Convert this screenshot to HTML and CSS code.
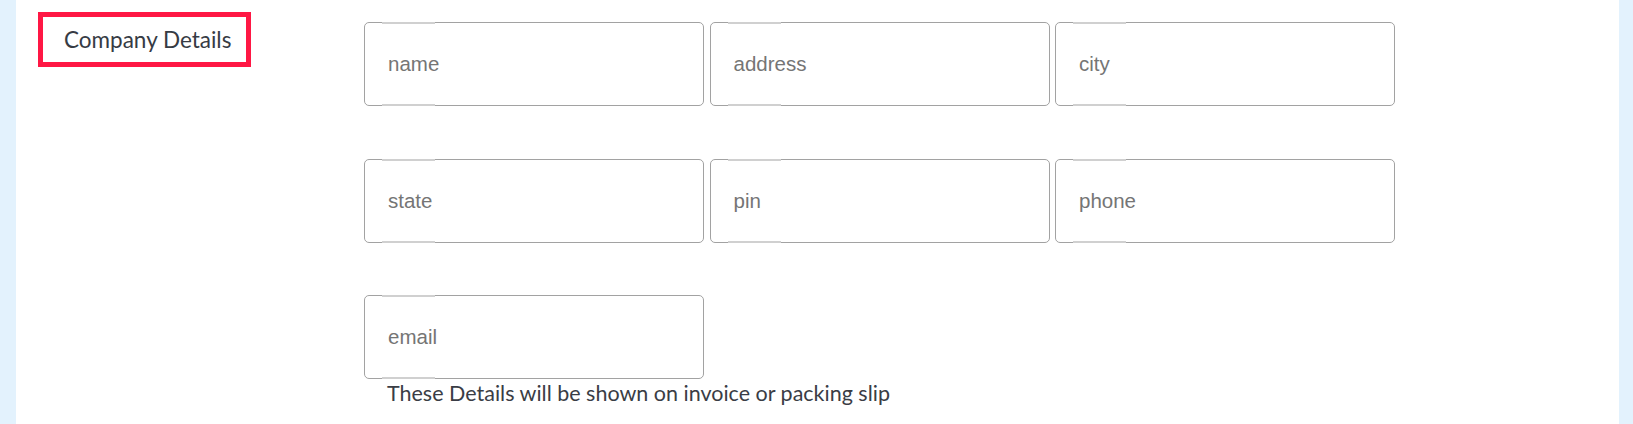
FILE: index.html
```html
<!DOCTYPE html>
<html lang="en">
<head>
<meta charset="utf-8">
<title>Company Details</title>
<link rel="stylesheet" href="styles.css">
</head>
<body>
<div class="panel">
  <div class="side">
    <div class="label-box">Company Details</div>
  </div>
  <div class="form">
    <div class="grid">
      <div class="field"><span class="ph">name</span></div>
      <div class="field"><span class="ph">address</span></div>
      <div class="field"><span class="ph">city</span></div>
      <div class="field"><span class="ph">state</span></div>
      <div class="field"><span class="ph">pin</span></div>
      <div class="field"><span class="ph">phone</span></div>
      <div class="field"><span class="ph">email</span></div>
    </div>
    <p class="help">These Details will be shown on invoice or packing slip</p>
  </div>
</div>
</body>
</html>
```
FILE: styles.css
```css
html, body {
  margin: 0;
  padding: 0;
}
body {
  background: #e3f2fd;
  height: 424px;
  overflow: hidden;
}
.panel {
  margin: 0 14px 0 16px;
  background: #ffffff;
  height: 424px;
  display: flex;
}
.side {
  width: 326px;
  padding: 12px 0 0 22px;
  flex: none;
}
.label-box {
  box-sizing: border-box;
  width: 213px;
  height: 55px;
  border: 5px solid #ff1744;
  padding-left: 21px;
  display: flex;
  align-items: center;
  font-family: Lato, "Open Sans", sans-serif;
  font-size: 22.5px;
  color: #363b44;
}
.form {
  padding-top: 22px;
}
.grid {
  display: grid;
  grid-template-columns: repeat(3, 340px);
  column-gap: 5.5px;
  row-gap: 52.5px;
}
.field {
  position: relative;
  box-sizing: border-box;
  height: 84px;
  border: 1px solid #a2a2a2;
  border-radius: 5px;
  display: flex;
  align-items: center;
  padding-left: 23px;
}
.field::before,
.field::after {
  content: "";
  position: absolute;
  left: 17px;
  width: 53px;
  height: 2px;
  background: #d0d0d0;
}
.field::before { top: -1px; }
.field::after { bottom: -1px; }
.ph {
  font-family: "Liberation Sans", Arial, sans-serif;
  font-size: 20.5px;
  color: #757575;
}
.help {
  margin: 1px 0 0 23px;
  font-family: Lato, "Open Sans", sans-serif;
  font-size: 21.5px;
  color: #3a3d45;
}
```
